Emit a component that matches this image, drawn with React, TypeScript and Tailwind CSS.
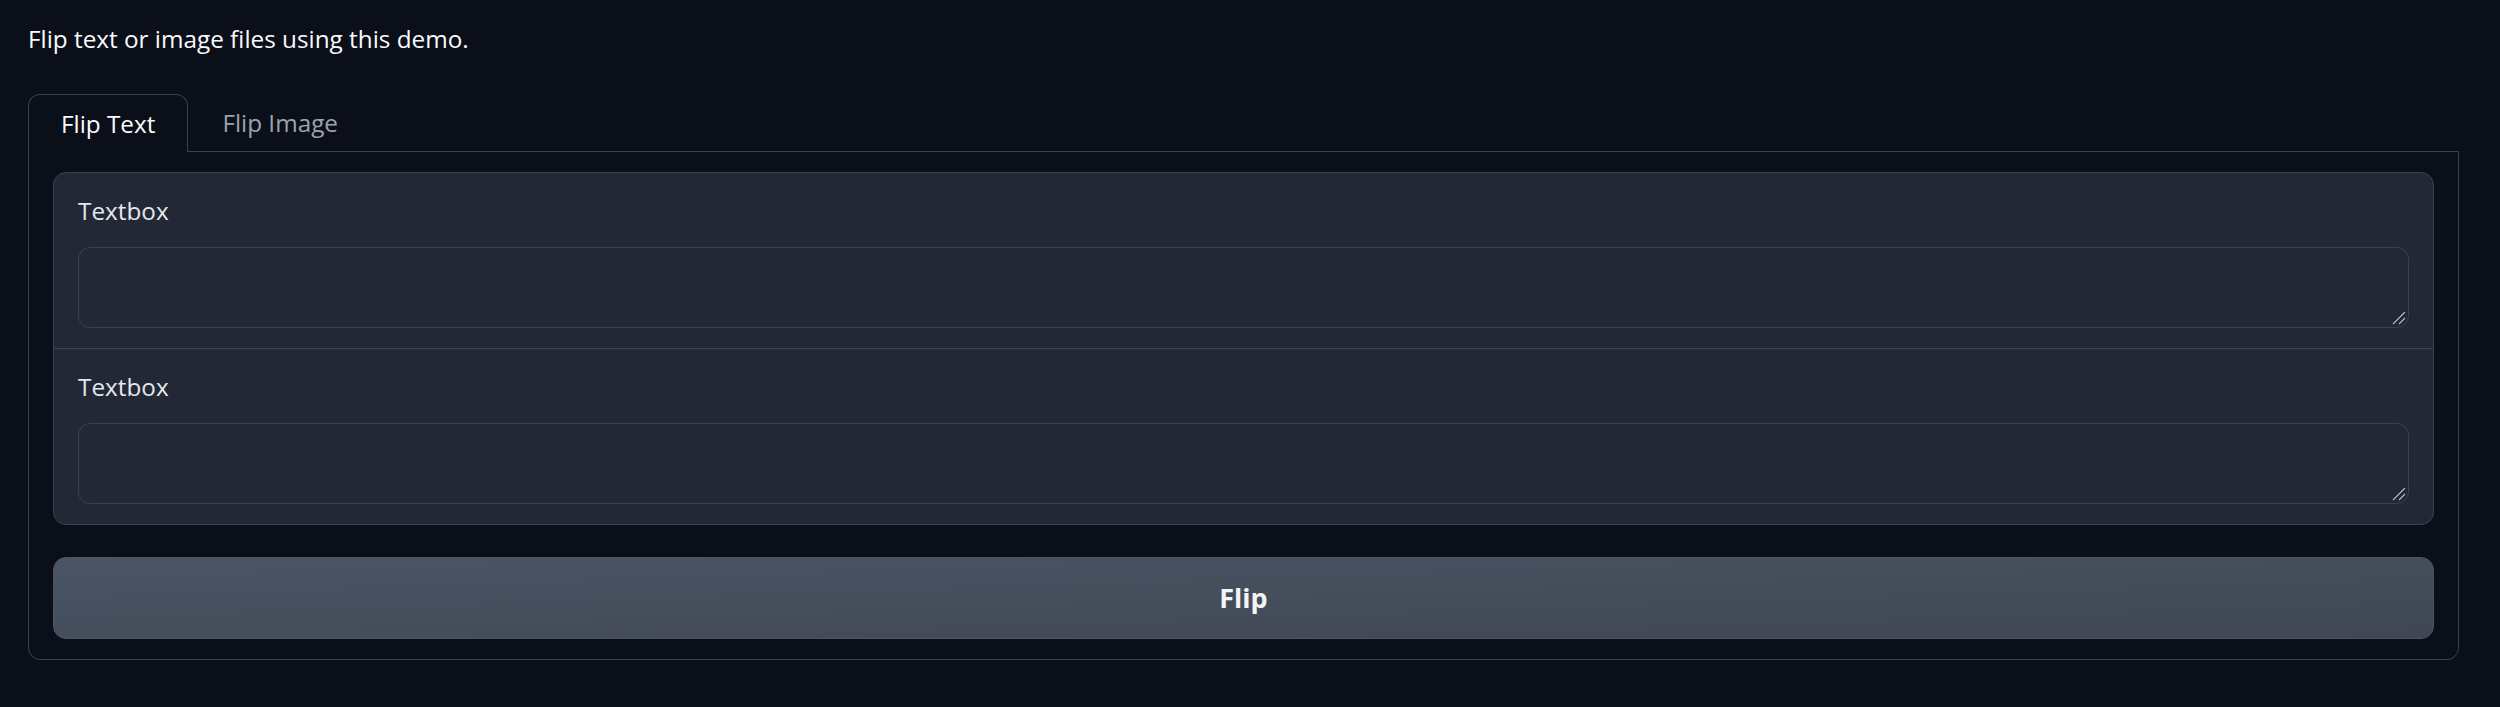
import React from "react";

const font = { fontFamily: '"Open Sans", "Noto Sans", sans-serif' };

function Field() {
  return (
    <div className="flex flex-col px-6 pt-[22px] pb-5">
      <div className="text-[24.3px] leading-[32px] text-[#e5e7eb]">Textbox</div>
      <div className="relative mt-[20px]">
        <textarea
          className="block h-[81px] w-full resize-none rounded-[12px] border border-[#3a4150] bg-[#222836] px-4 py-3 text-[24px] text-[#e5e7eb] outline-none"
          rows={2}
        />
        <svg className="pointer-events-none absolute bottom-[3px] right-[3px]" width="14" height="14" viewBox="0 0 14 14">
          <path d="M1 13 L13 1" stroke="#1a1f2a" strokeWidth="3" />
          <path d="M7 13 L13 7" stroke="#1a1f2a" strokeWidth="3" />
          <path d="M1 13 L13 1" stroke="#b8bcc4" strokeWidth="1.3" />
          <path d="M7 13 L13 7" stroke="#b8bcc4" strokeWidth="1.3" />
        </svg>
      </div>
    </div>
  );
}

export default function App() {
  return (
    <div className="min-h-[707px] w-full bg-[#0b0f19] pl-7 pt-[23px]" style={font}>
      <p className="text-[24.3px] leading-[32px] text-[#f9fafb]">Flip text or image files using this demo.</p>
      <div className="mt-[39px] w-[2431px]">
        <div className="flex">
          <button className="relative z-10 -mb-px rounded-t-[12px] border border-b-0 border-[#3a4150] bg-[#0b0f19] px-8 pt-[13px] pb-[12px] text-[24.3px] leading-[32px] text-[#f9fafb]">
            Flip Text
          </button>
          <button className="px-[34px] pt-[13px] pb-[12px] text-[24.3px] leading-[32px] text-[#9ca3af]">Flip Image</button>
        </div>
        <div className="flex flex-col gap-8 rounded-b-[12px] border border-[#3a4150] px-6 py-5">
          <div className="flex flex-col rounded-[13px] border border-[#3a4150] bg-[#222836]">
            <Field />
            <div className="h-px bg-[#3a4150]" />
            <Field />
          </div>
          <button className="h-[82px] w-full rounded-[13px] border border-[#4b5563] bg-gradient-to-br from-[#4b5563] to-[#3f4654] text-[27px] font-bold text-[#f3f4f6]">
            Flip
          </button>
        </div>
      </div>
    </div>
  );
}
